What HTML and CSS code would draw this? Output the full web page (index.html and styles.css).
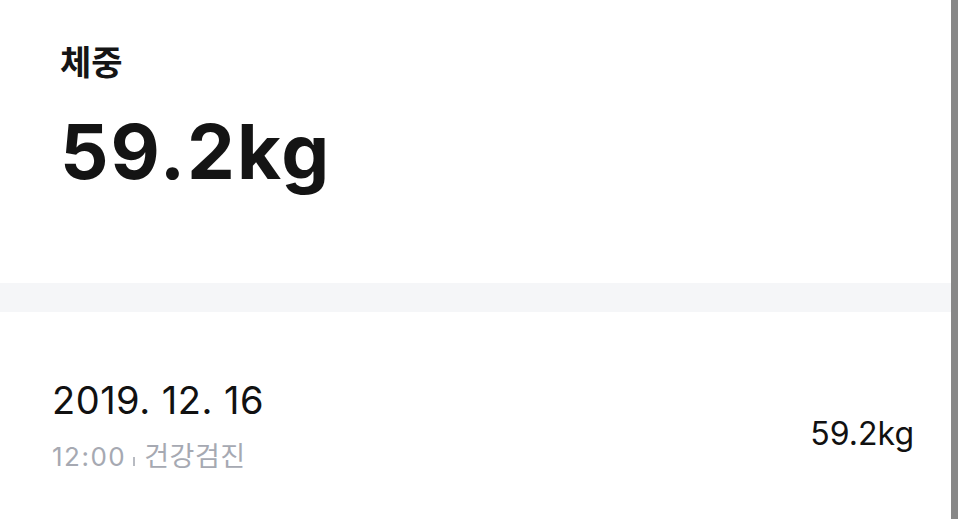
FILE: index.html
```html
<!DOCTYPE html>
<html lang="ko">
<head>
<meta charset="utf-8">
<link rel="stylesheet" href="styles.css">
</head>
<body>
<div class="page">
  <main class="content">
    <section class="summary">
      <h1 class="title">체중</h1>
      <div class="value">59.2kg</div>
    </section>
    <div class="divider"></div>
    <section class="record">
      <div class="record-left">
        <div class="date">2019. 12. 16</div>
        <div class="meta"><span class="time">12:00</span><span class="sep"></span><span class="source">건강검진</span></div>
      </div>
      <div class="record-value">59.2kg</div>
    </section>
  </main>
  <div class="scrollbar"></div>
</div>
</body>
</html>
```
FILE: styles.css
```css
html, body {
  margin: 0;
  padding: 0;
  background: #ffffff;
}
body {
  font-family: Inter, "Noto Sans CJK KR", sans-serif;
  color: #111111;
}
.page {
  display: flex;
  width: 966px;
  height: 519px;
  overflow: hidden;
}
.content {
  width: 951px;
  display: flex;
  flex-direction: column;
}
.scrollbar {
  width: 7px;
  height: 519px;
  background: #878787;
}
.summary {
  height: 283px;
  padding-left: 60px;
  box-sizing: border-box;
}
.title {
  margin: 0;
  padding-top: 38px;
  font-family: "Noto Sans CJK KR", sans-serif;
  font-size: 34px;
  font-weight: 700;
  line-height: 46px;
  color: #151515;
}
.value {
  margin-top: 22px;
  font-size: 76px;
  font-weight: 700;
  line-height: 90px;
  letter-spacing: 2px;
  color: #141414;
}
.divider {
  height: 29px;
  background: #f5f6f8;
}
.record {
  display: flex;
  justify-content: space-between;
  align-items: center;
  padding: 66px 37px 0 52px;
}
.date {
  font-size: 38px;
  line-height: 44px;
  letter-spacing: 0.5px;
  color: #111;
}
.meta {
  margin-top: 18px;
  display: flex;
  align-items: baseline;
  font-size: 26px;
  line-height: 34px;
  letter-spacing: 0.5px;
  color: #a6a9b2;
}
.time {
  letter-spacing: 1.5px;
}
.source {
  font-size: 27px;
}
.sep {
  display: inline-block;
  width: 2px;
  height: 9px;
  background: #b8bbc2;
  margin: 0 9px 3px 7px;
}
.record-value {
  font-size: 32px;
  line-height: 40px;
  color: #111;
  margin-top: 16px;
}
```
